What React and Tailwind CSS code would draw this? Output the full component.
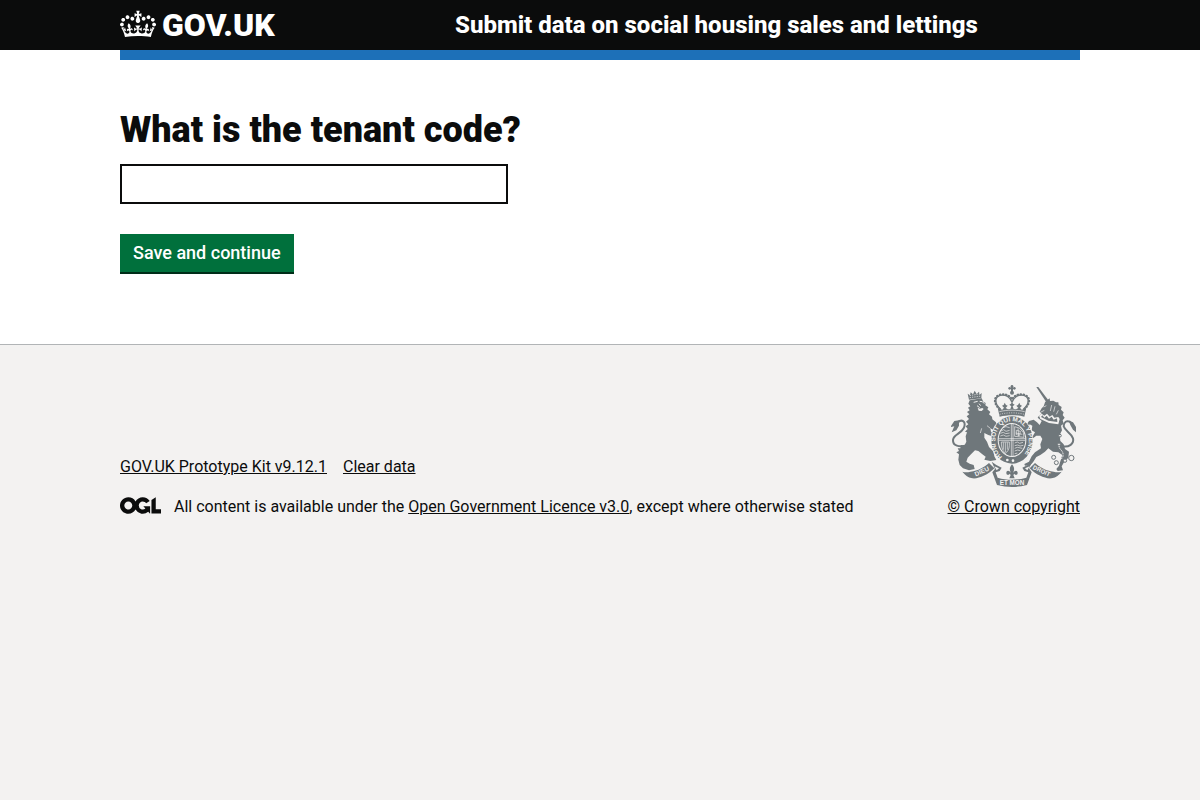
const CROWN =
  'M25 30.2c3.5 1.5 7.7-.2 9.1-3.7 1.5-3.6-.2-7.8-3.9-9.2-3.6-1.4-7.6.3-9.1 3.9-1.4 3.5.3 7.5 3.9 9zM9 39.5c3.6 1.5 7.8-.2 9.2-3.7 1.5-3.6-.2-7.8-3.9-9.1-3.6-1.5-7.6.2-9.1 3.8-1.4 3.5.3 7.5 3.8 9zM4.4 57.2c3.5 1.5 7.7-.2 9.1-3.8 1.5-3.6-.2-7.7-3.9-9.1-3.5-1.5-7.6.3-9.1 3.8-1.4 3.5.3 7.6 3.9 9.1zm38.3-21.4c3.5 1.5 7.7-.2 9.1-3.8 1.5-3.6-.2-7.7-3.9-9.1-3.6-1.5-7.6.3-9.1 3.8-1.3 3.6.4 7.7 3.9 9.1zm64.4-5.6c-3.6 1.5-7.8-.2-9.1-3.7-1.5-3.6.2-7.8 3.8-9.2 3.6-1.4 7.7.3 9.2 3.9 1.3 3.5-.4 7.5-3.9 9zm15.9 9.3c-3.6 1.5-7.7-.2-9.1-3.7-1.5-3.6.2-7.8 3.7-9.1 3.6-1.5 7.7.2 9.2 3.8 1.5 3.5-.3 7.5-3.8 9zm4.7 17.7c-3.6 1.5-7.8-.2-9.2-3.8-1.5-3.6.2-7.7 3.9-9.1 3.6-1.5 7.7.3 9.2 3.8 1.3 3.5-.4 7.6-3.9 9.1zM89.3 35.8c-3.6 1.5-7.8-.2-9.2-3.8-1.4-3.6.2-7.7 3.9-9.1 3.6-1.5 7.7.3 9.2 3.8 1.4 3.6-.3 7.7-3.9 9.1zM69.7 17.7l8.9 4.7V9.3l-8.9 2.8c-.2-.3-.5-.6-.9-.9L72.4 0H59.6l3.5 11.2c-.3.3-.6.5-.9.9l-8.8-2.8v13.1l8.8-4.7c.3.3.6.7.9.9l-5 15.4v.1c-.2.8-.4 1.6-.4 2.4 0 4.1 3.1 7.5 7 8.1h.2c.3 0 .7.1 1 .1.4 0 .7 0 1-.1h.2c4-.6 7.1-4.1 7.1-8.1 0-.8-.1-1.7-.4-2.4V34l-5.1-15.4c.4-.2.7-.6 1-.9zM66 92.8c16.9 0 32.8 1.1 47.1 3.2 4-16.9 8.9-26.7 14-33.5l-9.6-3.4c1 4.9 1.1 7.2 0 10.2-1.5-1.4-3-4.3-4.2-8.7L108.6 76c2.8-2 5-3.2 7.5-3.3-4.4 9.4-10 11.9-13.6 11.2-4.3-.8-6.3-4.6-5.6-7.9 1-4.7 5.7-5.9 8-.5 4.3-8.7-3-11.4-7.6-8.8 7.1-7.2 7.9-13.5 2.1-21.1-8 6.1-8.1 12.3-4.5 20.8-4.7-5.4-12.1-2.5-9.5 6.2 3.4-5.2 7.9-2 7.2 3.1-.6 4.3-6.4 7.8-13.5 7.2-10.3-.9-10.9-8-11.2-13.8 2.5-.5 7.1 1.8 11 7.3L80.2 60c-4.1 4.4-8 5.3-12.3 5.4 1.4-4.4 8-11.6 8-11.6H55.5s6.4 7.2 7.9 11.6c-4.2-.1-8-1-12.3-5.4l1.4 16.4c3.9-5.5 8.5-7.7 10.9-7.3-.3 5.8-.9 12.8-11.1 13.8-7.2.6-12.9-2.9-13.5-7.2-.7-5 3.8-8.3 7.1-3.1 2.7-8.7-4.6-11.6-9.4-6.2 3.7-8.5 3.6-14.7-4.6-20.8-5.8 7.6-5 13.9 2.2 21.1-4.7-2.6-11.9.1-7.7 8.8 2.3-5.5 7.1-4.2 8.1.5.7 3.3-1.3 7.1-5.7 7.9-3.5.7-9-1.8-13.5-11.2 2.5.1 4.7 1.3 7.5 3.3l-4.7-15.4c-1.2 4.4-2.7 7.2-4.3 8.7-1.1-3-.9-5.3 0-10.2l-9.5 3.4c5 6.9 9.9 16.7 14 33.5 14.8-2.1 30.8-3.2 47.7-3.2z';

const OGL =
  'M421.5 142.8V.1l-50.7 32.3v161.1h112.4v-50.7zm-122.3-9.6A47.12 47.12 0 0 1 221 97.8c0-26 21.1-47.1 47.1-47.1 16.7 0 31.4 8.7 39.7 21.8l42.7-27.2A97.63 97.63 0 0 0 268.1 0c-36.5 0-68.3 20.1-85.1 49.7A98 98 0 0 0 97.8 0C43.9 0 0 43.9 0 97.8s43.9 97.8 97.8 97.8c36.5 0 68.3-20.1 85.1-49.7a97.76 97.76 0 0 0 149.6 25.4l19.4 22.2h3v-87.8h-80l24.3 27.5zM97.8 145c-26 0-47.1-21.1-47.1-47.1s21.1-47.1 47.1-47.1 47.1 21.1 47.1 47.1S123.8 145 97.8 145';

function RoyalArms() {
  return (
    <svg
      aria-hidden="true"
      viewBox="12 6 375 306"
      className="h-[102px] w-[125px] fill-[#6f777b] font-['Liberation_Sans',sans-serif] font-bold"
    >
      {/* Lion */}
      <path d="M66 50l-4-18 7 5 2-9 7 6 5-11 6 10 7-7 2 9 6-5-1 16z" />
      <path d="M68 38l34-6M68 44l35-5" stroke="#f3f2f1" strokeWidth="2" fill="none" strokeDasharray="4 3" />
      <path d="M68 52L104 46L109 56L116 60L115 67L124 73L121 79L130 87L126 94L135 101L136 109L146 117L152 128L148 138L144 150L138 140L130 136L132 146L139 152L136 160L124 156L112 150L112 164L120 176L126 192L140 206L142 220L148 231L130 234L112 230L116 221L106 214L94 204L84 202L72 214L62 224L58 236L68 242L80 246L83 258L66 262L48 256L38 246L34 230L36 214L28 208L36 204L32 196L40 196L42 186L52 188L58 176L56 160L60 148L54 146L62 138L56 130L64 124L57 116L66 108L59 100L67 94L60 87L68 82L63 74L70 70L64 62Z" />
      <path d="M80 58l12-3M98 55l8 1 6 6M90 68l8 6M96 62l5 6" fill="none" stroke="#f3f2f1" strokeWidth="3" />
      <path d="M92 74l6 3 8-2 4 3-6 6-9-1z" fill="#f3f2f1" />
      <path d="M100 150l4-14M120 128l10 8" fill="none" stroke="#f3f2f1" strokeWidth="2" />
      <path d="M60 187C36 194 17 188 18 171C20 154 40 154 50 136C58 118 48 110 38 114C30 118 28 124 24 130" fill="none" stroke="#6f777b" strokeWidth="6" />
      <path d="M36 112L22 114L10 132L22 130L14 148L28 142L36 128Z" />

      {/* Unicorn */}
      <path d="M268 12L274 12L303 50L297 56Z" />
      <path d="M294 58L300 52L308 46L309 54L319 53L327 58L334 58L335 66L344 72L342 80L350 88L347 96L353 104L347 112L350 122L342 128L345 142L338 156L340 174L350 184L354 198L366 206L364 224L352 236L344 250L348 262L332 264L328 258L336 248L341 232L346 216L334 208L318 206L304 196L294 206L280 216L268 222L258 238L250 246L234 248L232 243L246 236L254 220L264 208L282 196L280 184L286 168L280 158L268 158L258 166L246 166L248 160L258 158L264 148L254 142L256 128L248 124L244 132L238 126L246 114L260 110L270 118L278 126L284 114L272 104L276 98L284 92L278 86L284 76L290 70Z" />
      <path d="M290 72l8-4M280 88l12-6M314 66l-4 18M324 70l-4 16M334 82l-6 12" stroke="#f3f2f1" strokeWidth="2" fill="none" />
      <path d="M276 98L284 92L292 98L300 92L308 101L316 96L322 104L334 102L338 108L334 124L306 120L280 108Z" fill="#f3f2f1" />
      <path d="M282 102L286 97L292 104L299 98L306 107L314 101L320 110L330 106L331 117L304 113Z" />
      <path d="M346 190C366 194 382 182 378 166C372 150 354 144 350 130C350 116 360 112 368 116C376 122 376 128 380 132" fill="none" stroke="#6f777b" strokeWidth="6" />
      <path d="M366 113L378 118L387 132L387 148L378 140L370 126Z" />
      <g fill="#f3f2f1" stroke="#6f777b" strokeWidth="3">
        <circle cx="373" cy="225" r="8" />
        <circle cx="320" cy="223" r="6" />
        <circle cx="328" cy="239" r="6" />
        <circle cx="354" cy="233" r="5" />
        <circle cx="336" cy="184" r="4" />
        <circle cx="339" cy="158" r="4" />
      </g>
      <path d="M336 188c0 12 10 12 12 24s-4 16-14 22" fill="none" stroke="#f3f2f1" strokeWidth="3" strokeDasharray="5 3" />

      {/* Crown */}
      <circle cx="195" cy="10" r="4" />
      <circle cx="188" cy="16" r="4" />
      <circle cx="202" cy="16" r="4" />
      <path d="M192 9h6v18h-6z" />
      <circle cx="195" cy="29" r="6" />
      <path d="M160 78C142 62 142 42 160 37C176 34 190 42 195 58M230 78C248 62 248 42 230 37C214 34 200 42 195 58" fill="none" stroke="#6f777b" strokeWidth="4" />
      <path d="M158 78C138 60 140 40 160 35C176 32 190 38 195 50M232 78C252 60 250 40 230 35C214 32 200 38 195 50" fill="none" stroke="#6f777b" strokeWidth="7" strokeLinecap="round" strokeDasharray="1 8" />
      <path d="M152 74L158 78L166 80L171 74L165 68L170 66L173 59L177 66L182 68L176 75L183 79L190 78L193 70L187 65L192 62L195 56L198 62L203 65L197 70L200 78L207 79L214 75L208 68L213 66L217 59L220 66L225 68L219 74L224 80L232 78L238 74L234 92L232 101C208 95 182 95 158 101L156 92Z" />
      <path d="M157 86C180 80 210 80 233 86" fill="none" stroke="#f3f2f1" strokeWidth="2" />
      <path d="M158 94C182 88 208 88 232 94" fill="none" stroke="#f3f2f1" strokeWidth="2" strokeDasharray="3 4" />

      {/* Garter and shield */}
      <ellipse cx="195" cy="171" rx="64" ry="73" fill="#f3f2f1" />
      <ellipse cx="195" cy="171" rx="62" ry="71" />
      <ellipse cx="195" cy="171" rx="43" ry="51" fill="#f3f2f1" />
      <path id="garter" d="M166 222C130 192 140 115 195 115S260 192 224 222" fill="none" />
      <text fontSize="19" fill="#f3f2f1">
        <textPath href="#garter">HONI SOIT QUI MAL Y PENSE</textPath>
      </text>
      <circle cx="181" cy="231" r="4" fill="#f3f2f1" />
      <circle cx="198" cy="233" r="4" fill="#f3f2f1" />
      <ellipse cx="195" cy="171" rx="40" ry="48" />
      <g fill="none" stroke="#f3f2f1" strokeWidth="2">
        <path d="M193 123v96M198 123v96M155 167h80M155 172h80" />
        <path d="M162 144l8-4 7 5 11-3M160 151l9-3 7 4 12-2M160 159l9-3 8 4 11-2M168 134l9-3 11 3" />
        <path d="M203 131l14 4 12 14 2 14-28-3zM208 142l12 3-2 12-10-2zM206 150l20 4M213 136l2 24" />
        <path d="M163 177h24v10c0 12-6 20-12 24-7-6-12-16-12-34zM169 178v22M175 178v30M181 178v22" />
        <path d="M203 180l8-3 7 4 10-3M203 188l9-2 7 3 10-2M203 196l8-3 15 3M203 204l9-3 8 2M203 212l8-2" />
      </g>

      {/* Motto ribbon */}
      <path d="M46 266C54 268 62 268 70 266C94 264 112 252 126 240L142 256C122 276 96 288 76 286C62 284 54 276 46 266Z" />
      <path d="M344 266C336 268 328 268 320 266C296 264 278 252 264 240L248 256C268 276 294 288 314 286C328 284 336 276 344 266Z" />
      <path d="M134 236L148 246L164 254L158 264L146 268L152 284C180 292 210 292 238 284L244 268L232 264L226 254L242 246L256 236L246 256L254 268L240 306C208 314 182 314 150 306L136 268L144 258Z" />
      <path d="M142 250l14 6-7 6zM248 250l-14 6 7 6z" fill="#f3f2f1" />
      <text x="195" y="305" fontSize="19" fill="#f3f2f1" textAnchor="middle">
        ET MON
      </text>
      <text fontSize="19" fill="#f3f2f1" textAnchor="middle" transform="translate(107 271) rotate(-24)">
        DIEU
      </text>
      <text fontSize="18" fill="#f3f2f1" textAnchor="middle" transform="translate(281 269) rotate(25)">
        DROIT
      </text>
      <path d="M195 244C204 254 202 262 198 270C204 260 212 262 212 270C212 277 204 277 202 272L199 276L203 286H187L191 276L188 272C186 277 178 277 178 270C178 262 186 260 192 270C188 262 186 254 195 244Z" />
    </svg>
  );
}

export default function App() {
  return (
    <div className="min-h-screen bg-[#f3f2f1] font-['Roboto',sans-serif] text-[#0b0c0c]">
      <div className="bg-white">
        <header className="bg-[#0b0c0c] px-8 text-white">
          <div className="mx-auto flex max-w-[960px] items-start py-[10px] leading-[30px]">
            <a href="#" className="flex w-[335px] items-start gap-[6px] text-[32px] font-black">
              <svg aria-hidden="true" viewBox="0 0 132 97" className="h-7 w-9 fill-current">
                <path d={CROWN} />
              </svg>
              <span>GOV.UK</span>
            </a>
            <a href="#" className="text-[24px] font-extrabold">
              Submit data on social housing sales and lettings
            </a>
          </div>
        </header>
        <div className="px-8">
          <div className="mx-auto h-[10px] max-w-[960px] bg-[#1d70b8]" />
          <main className="mx-auto max-w-[960px] pt-[50px] pb-[70px]">
            <form>
              <h1 className="text-[36px] leading-[40px] font-black">
                <label htmlFor="tenant-code">What is the tenant code?</label>
              </h1>
              <input
                id="tenant-code"
                name="tenant-code"
                type="text"
                className="mt-[14px] block h-10 w-full max-w-[388px] border-2 border-[#0b0c0c] bg-white p-[5px] text-[18px]"
              />
              <button
                type="button"
                className="mt-[30px] block h-10 border-b-2 border-[#002d18] bg-[#00703c] px-[13px] text-[18px] leading-[38px] font-medium text-white"
              >
                Save and continue
              </button>
            </form>
          </main>
        </div>
      </div>
      <footer className="border-t border-[#b1b4b6] px-8 pt-10 pb-6 text-[16px] leading-[20px]">
        <div className="mx-auto flex max-w-[960px] items-end justify-between">
          <div>
            <nav className="mb-5 flex gap-4">
              <a href="#" className="underline">GOV.UK Prototype Kit v9.12.1</a>
              <a href="#" className="underline">Clear data</a>
            </nav>
            <div className="flex items-start gap-[13px]">
              <svg aria-hidden="true" viewBox="0 0 483.2 195.7" className="h-[17px] w-[41px] fill-current">
                <path d={OGL} />
              </svg>
              <span>
                All content is available under the{' '}
                <a href="#" className="underline">Open Government Licence v3.0</a>, except where otherwise stated
              </span>
            </div>
          </div>
          <a href="#" className="flex flex-col items-center gap-[10px] underline">
            <RoyalArms />
            <span>© Crown copyright</span>
          </a>
        </div>
      </footer>
    </div>
  );
}
